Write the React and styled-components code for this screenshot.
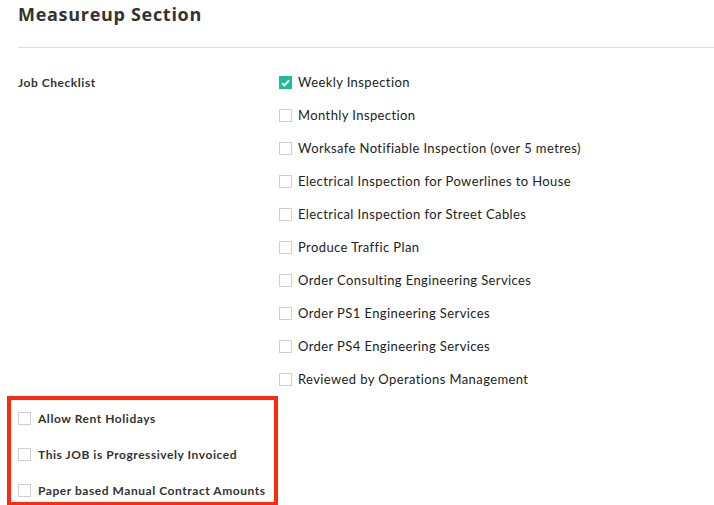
import React from "react";
import styled, { createGlobalStyle } from "styled-components";

const Global = createGlobalStyle`
  html, body { margin: 0; padding: 0; background: #fff; }
  body { font-family: Lato, "Open Sans", sans-serif; color: #222; }
  * { box-sizing: border-box; }
`;

const Page = styled.div`
  width: 714px;
  height: 505px;
  overflow: hidden;
`;

const Header = styled.div`
  padding: 2px 0 0 18px;
`;

const Title = styled.h2`
  margin: 0;
  font-family: "Open Sans", Lato, sans-serif;
  font-size: 18px;
  font-weight: 700;
  line-height: 25px;
  color: #333;
  letter-spacing: 0.7px;
`;

const Divider = styled.div`
  height: 1px;
  background: #dcdcdc;
  margin: 20px 0 0 18px;
`;

const Row = styled.div`
  display: flex;
  padding: 26px 0 0 18px;
`;

const Label = styled.div`
  width: 261px;
  font-size: 12px;
  font-weight: 700;
  color: #333;
  line-height: 17px;
  letter-spacing: 0.55px;
`;

const List = styled.div`
  display: flex;
  flex-direction: column;
  gap: 16px;
`;

const Item = styled.label`
  display: flex;
  align-items: center;
  gap: 6px;
  font-size: 13px;
  line-height: 17px;
  color: #222;
  letter-spacing: 0.4px;
`;

const Box = styled.span`
  width: 13px;
  height: 13px;
  flex: none;
  border: 1px solid ${(p) => (p.checked ? "#1fbc9c" : "#cfcfcf")};
  background: ${(p) => (p.checked ? "#1fbc9c" : "#fff")};
  display: flex;
  align-items: center;
  justify-content: center;
`;

const Highlight = styled.div`
  margin: 8px 0 0 7px;
  width: 271px;
  border: 4px solid #ff2a0d;
  padding: 10px 0 3px 7px;
  display: flex;
  flex-direction: column;
  gap: 19px;
`;

const BoldItem = styled(Item)`
  font-size: 12px;
  font-weight: 700;
  color: #333;
  gap: 7px;
  letter-spacing: 0.55px;
`;

const Check = ({ checked }) => (
  <Box checked={checked}>
    {checked && (
      <svg width="9" height="8" viewBox="0 0 9 8">
        <path d="M1 4.2 L3.4 6.4 L8 1.4" fill="none" stroke="#fff" strokeWidth="1.9" />
      </svg>
    )}
  </Box>
);

const items = [
  ["Weekly Inspection", true],
  ["Monthly Inspection"],
  ["Worksafe Notifiable Inspection (over 5 metres)"],
  ["Electrical Inspection for Powerlines to House"],
  ["Electrical Inspection for Street Cables"],
  ["Produce Traffic Plan"],
  ["Order Consulting Engineering Services"],
  ["Order PS1 Engineering Services"],
  ["Order PS4 Engineering Services"],
  ["Reviewed by Operations Management"],
];

const extras = [
  "Allow Rent Holidays",
  "This JOB is Progressively Invoiced",
  "Paper based Manual Contract Amounts",
];

export default function App() {
  return (
    <Page>
      <Global />
      <Header>
        <Title>Measureup Section</Title>
      </Header>
      <Divider />
      <Row>
        <Label>Job Checklist</Label>
        <List>
          {items.map(([t, c]) => (
            <Item key={t}>
              <Check checked={!!c} />
              {t}
            </Item>
          ))}
        </List>
      </Row>
      <Highlight>
        {extras.map((t) => (
          <BoldItem key={t}>
            <Check />
            {t}
          </BoldItem>
        ))}
      </Highlight>
    </Page>
  );
}
